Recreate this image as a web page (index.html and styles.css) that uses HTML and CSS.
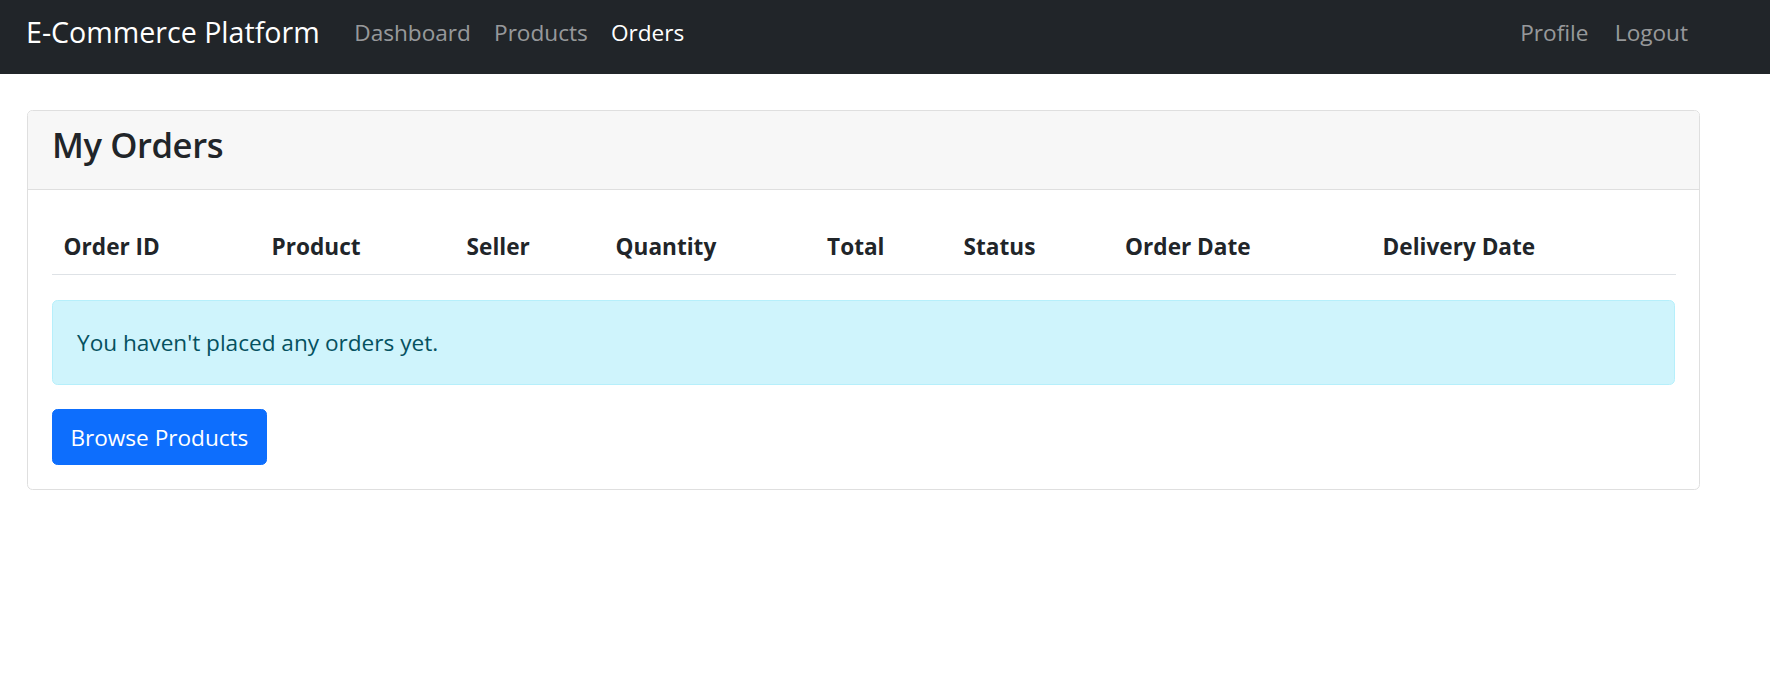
FILE: index.html
```html
<!DOCTYPE html>
<html lang="en">
<head>
<meta charset="utf-8">
<title>My Orders - E-Commerce Platform</title>
<link rel="stylesheet" href="styles.css">
</head>
<body>
<nav class="navbar">
  <a class="brand" href="#">E-Commerce Platform</a>
  <ul class="nav">
    <li><a class="nav-link" href="#">Dashboard</a></li>
    <li><a class="nav-link" href="#">Products</a></li>
    <li><a class="nav-link active" href="#">Orders</a></li>
  </ul>
  <ul class="nav nav-right">
    <li><a class="nav-link" href="#">Profile</a></li>
    <li><a class="nav-link" href="#">Logout</a></li>
  </ul>
</nav>
<main class="page">
  <section class="card">
    <div class="card-header">
      <h3>My Orders</h3>
    </div>
    <div class="card-body">
      <table class="orders">
        <colgroup>
          <col class="c1"><col class="c2"><col class="c3"><col class="c4">
          <col class="c5"><col class="c6"><col class="c7"><col class="c8">
        </colgroup>
        <thead>
          <tr>
            <th>Order ID</th>
            <th>Product</th>
            <th>Seller</th>
            <th>Quantity</th>
            <th>Total</th>
            <th>Status</th>
            <th>Order Date</th>
            <th>Delivery Date</th>
          </tr>
        </thead>
      </table>
      <div class="alert">You haven't placed any orders yet.</div>
      <a class="btn" href="#">Browse Products</a>
    </div>
  </section>
</main>
</body>
</html>
```
FILE: styles.css
```css
* { box-sizing: border-box; }

body {
  margin: 0;
  font-family: "Open Sans", "Noto Sans", sans-serif;
  font-size: 22.6px;
  line-height: 35px;
  color: #212529;
  background: #fff;
}

a { text-decoration: none; }

.navbar {
  display: flex;
  align-items: flex-start;
  height: 74px;
  padding: 10px 70px 0 26px;
  background: #212529;
}

.brand {
  font-size: 28.6px;
  line-height: 43.5px;
  color: #fff;
  margin-right: 23px;
}

.nav {
  display: flex;
  list-style: none;
  margin: 5px 0 0 0;
  padding: 0;
}

.nav-right { margin-left: auto; }

.nav-link {
  display: block;
  padding: 0 11.6px;
  color: rgba(255, 255, 255, 0.55);
}

.nav-right .nav-link { padding: 0 12px; }
.nav-right li:first-child .nav-link { padding-right: 14.5px; }

.nav-link.active { color: #fff; }

.page {
  padding: 36px 70px 0 27px;
}

.card {
  border: 1px solid #dfdfdf;
  border-radius: 5.5px;
  overflow: hidden;
}

.card-header {
  background: #f7f7f7;
  border-bottom: 1px solid #dfdfdf;
  padding: 9px 24px 20px;
}

.card-header h3 {
  margin: 0;
  font-size: 34.6px;
  line-height: 49px;
  font-weight: 600;
  letter-spacing: -0.4px;
}

.card-body {
  padding: 26px 24px 24px;
}

.orders {
  width: 100%;
  border-collapse: collapse;
  table-layout: fixed;
  margin-bottom: 25px;
}

.orders .c1 { width: 208px; }
.orders .c2 { width: 195px; }
.orders .c3 { width: 149px; }
.orders .c4 { width: 211.5px; }
.orders .c5 { width: 136.5px; }
.orders .c6 { width: 161.5px; }
.orders .c7 { width: 257.5px; }
.orders .c8 { width: 305px; }

.orders th {
  text-align: left;
  font-weight: 700;
  padding: 12.8px 11.6px 10.7px;
  border-bottom: 1px solid #dee2e6;
  white-space: nowrap;
}

.alert {
  padding: 24px 24px;
  background: #cff4fc;
  border: 1px solid #b6effb;
  border-radius: 5.5px;
  color: #055160;
  margin-bottom: 24px;
}

.btn {
  display: inline-block;
  padding: 9.3px 17.4px;
  border: 1px solid #0d6efd;
  border-radius: 5.5px;
  background: #0d6efd;
  color: #fff;
}
```
